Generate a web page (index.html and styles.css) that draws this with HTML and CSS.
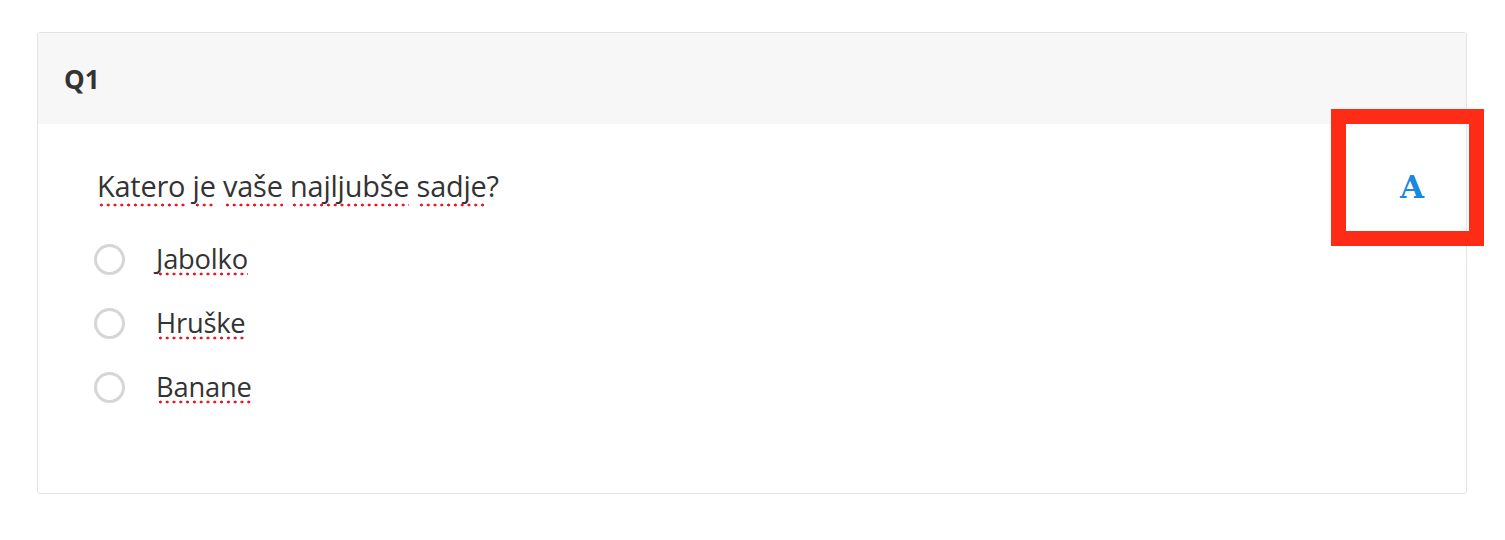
FILE: index.html
```html
<!DOCTYPE html>
<html>
<head>
<meta charset="utf-8">
<link rel="stylesheet" href="styles.css">
</head>
<body>
<div class="page">
  <div class="card">
    <div class="card-header">Q1</div>
    <div class="card-body">
      <div class="question"><span class="sp">Katero</span> <span class="sp">je</span> <span class="sp">vaše</span> <span class="sp">najljubše</span> <span class="sp">sadje</span>?</div>
      <div class="options">
        <label class="option"><span class="radio"></span><span class="sp">Jabolko</span></label>
        <label class="option"><span class="radio"></span><span class="sp">Hruške</span></label>
        <label class="option"><span class="radio"></span><span class="sp">Banane</span></label>
      </div>
    </div>
    <div class="font-btn"><span class="font-a">A</span></div>
  </div>
</div>
</body>
</html>
```
FILE: styles.css
```css
html, body {
  margin: 0;
  padding: 0;
  background: #fff;
}
.page {
  padding: 32px 0 0 37px;
}
.card {
  position: relative;
  width: 1428px;
  height: 460px;
  border: 1px solid #e3e3e3;
  border-radius: 3px;
  font-family: "Open Sans", "Lato", sans-serif;
  color: #333;
}
.card-header {
  height: 91px;
  background: #f7f7f7;
  box-sizing: border-box;
  padding-left: 26px;
  display: flex;
  align-items: center;
  font-weight: 700;
  font-size: 26px;
  color: #333;
  padding-top: 1px;
}
.card-body {
  padding: 43px 0 0 59px;
}
.question {
  font-size: 28.9px;
  line-height: 38px;
  color: #333;
  letter-spacing: -0.2px;
}
.sp {
  background-image: radial-gradient(circle, #f0141e 1.3px, transparent 1.7px);
  background-repeat: repeat-x;
  background-size: 6.8px 4px;
  background-position: 1px 100%;
  padding-bottom: 2px;
}
.options {
  margin-top: 39px;
  display: flex;
  flex-direction: column;
  gap: 33px;
}
.option {
  display: flex;
  align-items: center;
  gap: 31px;
  font-size: 27.3px;
  line-height: 31px;
  height: 31px;
  margin-left: -3px;
  letter-spacing: -0.2px;
}
.radio {
  width: 31px;
  height: 31px;
  box-sizing: border-box;
  border: 3px solid #d6d6d6;
  border-radius: 50%;
  flex: none;
}
.font-btn {
  position: absolute;
  left: 1293px;
  top: 76px;
  width: 123px;
  height: 107px;
  border: 15px solid #fe2b16;
  display: flex;
  align-items: center;
  justify-content: center;
  box-sizing: content-box;
}
.font-a {
  font-family: "DejaVu Serif", serif;
  font-weight: 700;
  font-size: 31px;
  color: #1a88e0;
  margin: 18px 0 0 9px;
}
```
